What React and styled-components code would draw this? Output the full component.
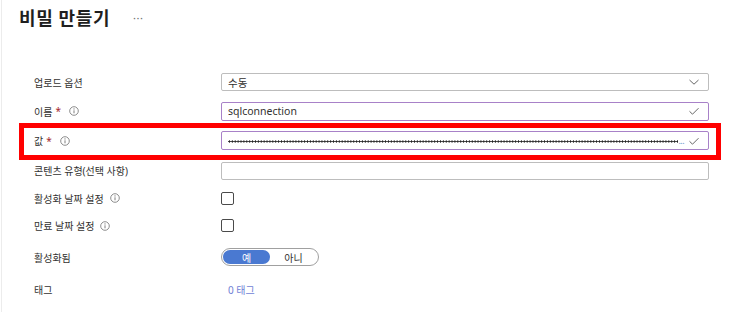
import React from "react";
import styled, { createGlobalStyle } from "styled-components";

const Global = createGlobalStyle`
  html, body { margin: 0; padding: 0; background: #fff; }
  body { font-family: "Noto Sans", "Noto Sans CJK KR", sans-serif; color: #323130; }
`;

const Page = styled.div`
  position: relative;
  width: 751px;
  height: 312px;
  box-sizing: border-box;
  border-left: 1px solid #ececec;
  margin-left: 1px;
  overflow: hidden;
`;

const Header = styled.div`
  display: flex;
  align-items: center;
  gap: 23px;
  height: 36px;
  padding-left: 17px;
  margin-bottom: 31.5px;
`;

const Title = styled.h1`
  margin: 0;
  font-size: 18px;
  font-weight: 700;
  letter-spacing: 0.6px;
  color: #1f1f1f;
  line-height: 20px;
`;

const More = styled.span`
  font-size: 11px;
  color: #707070;
  letter-spacing: 0.5px;
  margin-top: -2px;
`;

const Form = styled.div`
  display: flex;
  flex-direction: column;
  padding-left: 32px;
`;

const Row = styled.div`
  display: grid;
  grid-template-columns: 187px 488px;
  align-items: center;
  height: ${(p) => p.$h}px;
`;

const Label = styled.div`
  display: flex;
  align-items: center;
  font-size: 10px;
  color: #323130;
  gap: 3px;
`;

const Star = styled.span`
  color: #a4262c;
  font-size: 10px;
  margin-right: 2px;
`;

const InfoIcon = styled.svg`
  width: 10px;
  height: 10px;
  margin-left: 3px;
`;

const Field = styled.div`
  display: flex;
  align-items: center;
  box-sizing: border-box;
  height: ${(p) => p.$h || 19}px;
  border: 1px solid ${(p) => (p.$accent ? "#a881c8" : "#bdbdbd")};
  border-radius: 2px;
  padding: 0 8px 0 6px;
  font-size: 10.5px;
  color: #323130;
  background: #fff;
`;

const FieldText = styled.span`
  flex: 1;
  white-space: nowrap;
  overflow: hidden;
  text-overflow: ellipsis;
`;

const Dots = styled.span`
  flex: 1;
  height: 3px;
  margin-top: 1px;
  background-image: radial-gradient(circle, #222 0.9px, transparent 1.25px);
  background-size: 2.9px 3px;
  background-repeat: repeat-x;
  background-position: left center;
`;

const Ellipsis = styled.span`
  font-size: 9px;
  line-height: 9px;
  color: #6f98cc;
  margin: 0 4px 0 1px;
  letter-spacing: -0.6px;
`;

const Icon = styled.svg`
  width: 12px;
  height: 12px;
  flex-shrink: 0;
`;

const Checkbox = styled.div`
  width: 13px;
  height: 13px;
  box-sizing: border-box;
  border: 1px solid #4a4a4a;
  border-radius: 2px;
`;

const Toggle = styled.div`
  display: flex;
  align-items: center;
  width: 98px;
  height: 18px;
  box-sizing: border-box;
  border: 1px solid #a0a0a0;
  border-radius: 9px;
  padding: 1px;
`;

const ToggleOption = styled.div`
  flex: 1;
  height: 14px;
  border-radius: 7px;
  display: flex;
  align-items: center;
  justify-content: center;
  font-size: 10px;
  background: ${(p) => (p.$on ? "#4a79d1" : "transparent")};
  color: ${(p) => (p.$on ? "#fff" : "#323130")};
`;

const TagLink = styled.span`
  font-size: 10px;
  color: #6f7fd6;
  padding-left: 7px;
`;

const Highlight = styled.div`
  position: absolute;
  left: 17px;
  top: 123px;
  width: 702px;
  height: 37px;
  box-sizing: border-box;
  border: 5px solid #ff0000;
  pointer-events: none;
`;

const Info = () => (
  <InfoIcon viewBox="0 0 10 10">
    <circle cx="5" cy="5" r="4.3" fill="none" stroke="#707070" strokeWidth="0.8" />
    <line x1="5" y1="4.3" x2="5" y2="7.3" stroke="#707070" strokeWidth="0.9" />
    <circle cx="5" cy="2.9" r="0.55" fill="#707070" />
  </InfoIcon>
);

const Chevron = () => (
  <Icon viewBox="0 0 12 12">
    <path d="M1.5 4 L6 8.2 L10.5 4" fill="none" stroke="#555" strokeWidth="0.9" />
  </Icon>
);

const Check = () => (
  <Icon viewBox="0 0 12 12">
    <path d="M1.5 6.3 L4.5 9.2 L10.5 3.2" fill="none" stroke="#555" strokeWidth="0.9" />
  </Icon>
);

export default function App() {
  return (
    <>
      <Global />
      <Page>
        <Header>
          <Title>비밀 만들기</Title>
          <More>···</More>
        </Header>
        <Form>
          <Row $h={29}>
            <Label>업로드 옵션</Label>
            <Field $h={18}>
              <FieldText>수동</FieldText>
              <Chevron />
            </Field>
          </Row>
          <Row $h={29}>
            <Label>
              이름<Star>*</Star>
              <Info />
            </Label>
            <Field $accent>
              <FieldText>sqlconnection</FieldText>
              <Check />
            </Field>
          </Row>
          <Row $h={30}>
            <Label>
              값<Star>*</Star>
              <Info />
            </Label>
            <Field $accent>
              <Dots />
              <Ellipsis>...</Ellipsis>
              <Check />
            </Field>
          </Row>
          <Row $h={30}>
            <Label>콘텐츠 유형(선택 사항)</Label>
            <Field $h={18} />
          </Row>
          <Row $h={25}>
            <Label>
              활성화 날짜 설정
              <Info />
            </Label>
            <Checkbox />
          </Row>
          <Row $h={30}>
            <Label>
              만료 날짜 설정
              <Info />
            </Label>
            <Checkbox />
          </Row>
          <Row $h={33}>
            <Label>활성화됨</Label>
            <Toggle>
              <ToggleOption $on>예</ToggleOption>
              <ToggleOption>아니</ToggleOption>
            </Toggle>
          </Row>
          <Row $h={32}>
            <Label>태그</Label>
            <TagLink>0 태그</TagLink>
          </Row>
        </Form>
        <Highlight />
      </Page>
    </>
  );
}
